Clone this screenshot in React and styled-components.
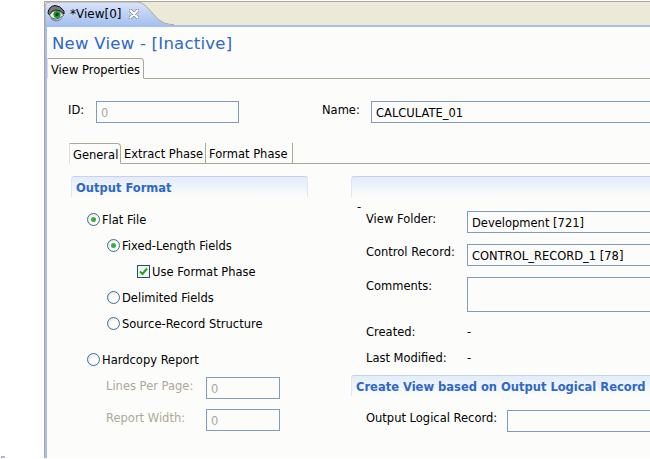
import React from "react";
import styled, { createGlobalStyle } from "styled-components";

const Global = createGlobalStyle`
  html, body { margin: 0; padding: 0; background: #fff; }
  body { font-family: "DejaVu Sans", "Liberation Sans", sans-serif; font-size: 11.5px; color: #000; }
`;
const Page = styled.div`width: 650px; height: 459px; display: flex; overflow: hidden; background: #fff;`;
const Gutter = styled.div`
  width: 44px; flex: none; display: flex; flex-direction: column; justify-content: flex-end; padding: 0 0 1px 1px; box-sizing: border-box;
`;
const GutterMark = styled.div`width: 3px; height: 2px; background: #a3bff0; border-left: 1px solid #aca899;`;
const Editor = styled.div`flex: 1; min-width: 0; display: flex; flex-direction: column; padding: 1px 0 1px;`;
const TabBar = styled.div`
  height: 24px; flex: none; display: flex; background: #ece9d8; border-top: 1px solid #aca899;
  box-sizing: border-box; border-left: 1px solid #aca899;
`;
const ActiveTab = styled.div`
  width: 114px; height: 24px; margin-top: -1px; flex: none; position: relative; display: flex; align-items: center;
`;
const TabShape = styled.svg`position: absolute; left: -1px; top: 0;`;
const TabIcon = styled.svg`position: relative; margin-left: 2px; flex: none;`;
const TabText = styled.span`position: relative; margin: 1px 0 0 5px; font-size: 12px;`;
const CloseIcon = styled.svg`position: relative; margin: 1px 0 0 8px; flex: none;`;
const Body = styled.div`
  flex: 1; min-height: 0; display: flex; flex-direction: column; background: #fcfcfb;
  border-left: 1px solid #aca899; border-top: 2px solid #a3bff0; box-shadow: inset 2px 0 0 #a3bff0; padding-left: 2px;
`;
const Title = styled.div`
  height: 31px; flex: none; padding: 1px 0 0 5px; box-sizing: border-box; display: flex; align-items: center;
  font-size: 16.5px; color: #2e68c8; letter-spacing: 0.25px;
`;
const TabStrip = styled.div`display: flex; flex: none; border-bottom: 1px solid #aca899; height: 20px; margin-left: ${p => p.$inset || 0}px;`;
const MainTab = styled.div`
  display: flex; align-items: center; box-sizing: border-box; white-space: nowrap; width: ${p => p.$w}px; padding: 2px 0 0 3px;
  ${p => p.$active ? `
    border: 1px solid #aca899; border-bottom: 1px solid #fcfcfb; margin-bottom: -1px; height: 21px;
    border-top-right-radius: 4px; border-left-color: #ddd; background: #fcfcfb;
  ` : `border-right: 1px solid #aca899;`}
`;
const Props = styled.div`flex: 1; min-height: 0; padding: 22px 0 0 21px; display: flex; flex-direction: column;`;
const TopRow = styled.div`display: flex; align-items: flex-start; height: 22px;`;
const Label = styled.span`
  color: ${p => p.$disabled ? "#aca899" : "#000"}; white-space: nowrap; line-height: 16px; display: inline-block;
`;
const LabelCell = styled.div`width: ${p => p.$w}px; flex: none; height: 100%; padding-top: ${p => p.$t ?? 1}px; box-sizing: border-box;`;
const Spacer = styled.div`width: ${p => p.$w}px; flex: none;`;
const Field = styled.div`
  border: 1px solid #7f9db9; box-sizing: border-box; height: ${p => p.$h || 22}px;
  ${p => p.$w ? `width: ${p.$w}px; flex: none;` : "flex: 1 0 300px;"}
  padding: 3px 0 0 4px; line-height: 16px; background: #fcfcfb; color: ${p => p.$disabled ? "#aca899" : "#000"}; white-space: nowrap;
`;
const SubTabs = styled.div`margin-top: 20px;`;
const Panes = styled.div`display: grid; grid-template-columns: 237px 340px; column-gap: 43px; padding: 12px 0 0 3px;`;
const Section = styled.div`
  border-top: 1px solid #c3d3ef; border-left: 1px solid #dce6f6; border-right: 1px solid #dce6f6;
  border-top-left-radius: 3px; border-top-right-radius: 3px; height: 21px; box-sizing: border-box;
  background: linear-gradient(#e3ecfa, #fcfcfb); padding: 3px 0 0 4px; margin-top: ${p => p.$gap || 0}px;
  font-weight: bold; color: #2e68c8; line-height: 16px; white-space: nowrap;
`;
const Options = styled.div`display: flex; flex-direction: column;`;
const Option = styled.div`
  display: flex; align-items: center; height: 26px; padding-left: ${p => p.$indent}px; margin-top: ${p => p.$gap || 0}px;
  ${Label} { padding-top: 1px; }
`;
const Circle = styled.span`
  width: 13px; height: 13px; flex: none; border-radius: 50%; box-sizing: border-box; border: 1.5px solid #3a6ea0;
  background: radial-gradient(circle at 60% 60%, #fff 30%, #dcdcd4); display: flex; align-items: center; justify-content: center; margin-right: 2px;
`;
const Dot = styled.span`width: 5px; height: 5px; border-radius: 50%; background: #3ea93e;`;
const Check = styled.svg`flex: none; margin-right: 2px;`;
const SubForm = styled.div`display: grid; grid-template-columns: 100px 74px; row-gap: 10px; padding: 5px 0 0 35px;`;
const Right = styled.div`display: flex; flex-direction: column; min-width: 0;`;
const Tick = styled.div`height: 14px; line-height: 21px; padding-left: 6px;`;
const FormRow = styled.div`display: flex; height: ${p => p.$h}px; padding-left: 15px; margin-top: ${p => p.$gap || 0}px;`;
const Value = styled.div`line-height: 16px; padding-top: 1px;`;

const Radio = ({ on, indent, gap, children }) => (
  <Option $indent={indent} $gap={gap}>
    <Circle>{on && <Dot />}</Circle>
    <Label>{children}</Label>
  </Option>
);

export default function App() {
  return (
    <Page>
      <Global />
      <Gutter><GutterMark /></Gutter>
      <Editor>
        <TabBar>
          <ActiveTab>
            <TabShape width="130" height="25" viewBox="0 0 130 25">
              <defs>
                <linearGradient id="tg" x1="0" y1="0" x2="0" y2="1">
                  <stop offset="0" stopColor="#d9e4f9" />
                  <stop offset="1" stopColor="#a3bff0" />
                </linearGradient>
              </defs>
              <path d="M1 25V6Q1 1 6 1H94C102 2 108 13 115 19Q120 23 127 24V25Z" fill="url(#tg)" />
              <path d="M1 25V6Q1 1 6 1H94C102 2 108 13 115 19Q120 23 127 23.5H130" fill="none" stroke="#aca899" />
            </TabShape>
            <TabIcon width="18" height="18" viewBox="0 0 18 18">
              <path d="M1 9Q2 2 8 1.5Q13 1.5 17 7L17 10Q13 5.5 8.5 6Q4 6.5 2.5 11Z" fill="#777" stroke="#111" strokeWidth="1" />
              <path d="M2.5 11Q5 6.5 9 6.5Q14 6.5 16.5 11.5Q12 15 8 15Q4 14.5 2.5 11Z" fill="#f0f0ec" stroke="#222" strokeWidth="0.7" />
              <circle cx="10" cy="10.5" r="3.6" fill="#129a22" />
              <circle cx="10" cy="10.5" r="1.5" fill="#032" />
              <path d="M3 13Q6 16 9 16Q13 16 16 13.5Q13 18 8 17.5Q4 16.5 3 13Z" fill="#8a8a8a" />
            </TabIcon>
            <TabText>*View[0]</TabText>
            <CloseIcon width="10" height="10" viewBox="0 0 10 10">
              <path d="M1.5 1.5L8.5 8.5M8.5 1.5L1.5 8.5" stroke="#7f8796" strokeWidth="3.6" strokeLinecap="round" />
              <path d="M1.5 1.5L8.5 8.5M8.5 1.5L1.5 8.5" stroke="#fff" strokeWidth="2.2" strokeLinecap="round" fill="none" />
            </CloseIcon>
          </ActiveTab>
        </TabBar>
        <Body>
          <Title>New View - [Inactive]</Title>
          <TabStrip>
            <MainTab $active $w={97}>View Properties</MainTab>
          </TabStrip>
          <Props>
            <TopRow>
              <LabelCell $w={28}><Label>ID:</Label></LabelCell>
              <Field $w={143} $disabled>0</Field>
              <Spacer $w={83} />
              <LabelCell $w={49}><Label>Name:</Label></LabelCell>
              <Field>CALCULATE_01</Field>
            </TopRow>
            <SubTabs>
              <TabStrip $inset={1}>
                <MainTab $active $w={52}>General</MainTab>
                <MainTab $w={85}>Extract Phase</MainTab>
                <MainTab $w={87}>Format Phase</MainTab>
              </TabStrip>
              <Panes>
                <div>
                  <Section>Output Format</Section>
                  <Options>
                    <Radio on indent={16} gap={9}>Flat File</Radio>
                    <Radio on indent={36}>Fixed-Length Fields</Radio>
                    <Option $indent={66}>
                      <Check width="13" height="13" viewBox="0 0 13 13">
                        <rect x="0.5" y="0.5" width="12" height="12" fill="#f4f4ee" stroke="#1c5180" />
                        <path d="M3 6.5L5.5 9L10 3.5" fill="none" stroke="#21a121" strokeWidth="2" />
                      </Check>
                      <Label>Use Format Phase</Label>
                    </Option>
                    <Radio indent={36}>Delimited Fields</Radio>
                    <Radio indent={36}>Source-Record Structure</Radio>
                    <Radio indent={16} gap={10}>Hardcopy Report</Radio>
                    <SubForm>
                      <LabelCell $w={100}><Label $disabled>Lines Per Page:</Label></LabelCell>
                      <Field $w={74} $disabled>0</Field>
                      <LabelCell $w={100}><Label $disabled>Report Width:</Label></LabelCell>
                      <Field $w={74} $disabled>0</Field>
                    </SubForm>
                  </Options>
                </div>
                <Right>
                  <Section />
                  <Tick>-</Tick>
                  <FormRow $h={22}>
                    <LabelCell $w={101} $t={0}><Label>View Folder:</Label></LabelCell>
                    <Field>Development [721]</Field>
                  </FormRow>
                  <FormRow $h={22} $gap={11}>
                    <LabelCell $w={101} $t={0}><Label>Control Record:</Label></LabelCell>
                    <Field>CONTROL_RECORD_1 [78]</Field>
                  </FormRow>
                  <FormRow $h={35} $gap={11}>
                    <LabelCell $w={101}><Label>Comments:</Label></LabelCell>
                    <Field $h={35} />
                  </FormRow>
                  <FormRow $h={16} $gap={11}>
                    <LabelCell $w={101}><Label>Created:</Label></LabelCell>
                    <Value>-</Value>
                  </FormRow>
                  <FormRow $h={16} $gap={10}>
                    <LabelCell $w={101}><Label>Last Modified:</Label></LabelCell>
                    <Value>-</Value>
                  </FormRow>
                  <Section $gap={10}>Create View based on Output Logical Record</Section>
                  <FormRow $h={22} $gap={14}>
                    <LabelCell $w={141} $t={0}><Label>Output Logical Record:</Label></LabelCell>
                    <Field />
                  </FormRow>
                </Right>
              </Panes>
            </SubTabs>
          </Props>
        </Body>
      </Editor>
    </Page>
  );
}
